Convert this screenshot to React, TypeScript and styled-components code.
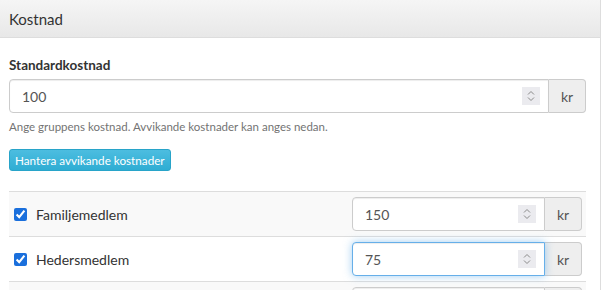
import React from 'react';
import styled, { createGlobalStyle } from 'styled-components';

const GlobalStyle = createGlobalStyle`
  html, body {
    margin: 0;
    padding: 0;
    overflow: hidden;
    background: #fff;
  }
  body {
    font-family: 'Lato', 'Noto Sans', sans-serif;
    color: #333;
  }
`;

interface CostRow {
  name: string;
  value: string;
  focused?: boolean;
}

const rows: CostRow[] = [
  { name: 'Familjemedlem', value: '150' },
  { name: 'Hedersmedlem', value: '75', focused: true },
  { name: 'Junior', value: '50' },
];

const Spinner = () => (
  <SpinBox>
    <svg width='10' height='14' viewBox='0 0 10 14' fill='none'>
      <path d='M2 5.5 L5 2.5 L8 5.5' stroke='#8a8a8a' strokeWidth='1' />
      <path d='M2 8.5 L5 11.5 L8 8.5' stroke='#8a8a8a' strokeWidth='1' />
    </svg>
  </SpinBox>
);

const MoneyInput = ({ value, focused }: { value: string; focused?: boolean }) => (
  <InputGroup>
    <Field $focused={focused}>
      <FieldText value={value} readOnly size={1} />
      <Spinner />
    </Field>
    <Addon>kr</Addon>
  </InputGroup>
);

const App = () => {
  return (
    <>
      <GlobalStyle />
      <Panel>
        <Heading>Kostnad</Heading>
        <Body>
          <Label>Standardkostnad</Label>
          <MoneyInput value='100' />
          <Help>Ange gruppens kostnad. Avvikande kostnader kan anges nedan.</Help>
          <InfoButton>Hantera avvikande kostnader</InfoButton>
          <Table>
            <colgroup>
              <col />
              <col style={{ width: 239 }} />
            </colgroup>
            <tbody>
              {rows.map((row, i) => (
                <Row key={row.name} $striped={i % 2 === 0}>
                  <NameCell>
                    <CheckLabel>
                      <Check type='checkbox' defaultChecked />
                      {row.name}
                    </CheckLabel>
                  </NameCell>
                  <InputCell>
                    <MoneyInput value={row.value} focused={row.focused} />
                  </InputCell>
                </Row>
              ))}
            </tbody>
          </Table>
        </Body>
      </Panel>
    </>
  );
};

export default App;

// Styled components
const Panel = styled.div`
  width: 600px;
  border-right: 1px solid #ddd;
  min-height: 290px;
`;

const Heading = styled.div`
  height: 38px;
  box-sizing: border-box;
  padding: 0 9px;
  display: flex;
  align-items: center;
  font-size: 15px;
  color: #333;
  background: linear-gradient(to bottom, #f5f5f5, #e8e8e8);
  border-bottom: 1px solid #ddd;
`;

const Body = styled.div`
  padding: 19px 14px 0 9px;
`;

const Label = styled.div`
  font-weight: 700;
  font-size: 13.5px;
  margin-bottom: 6px;
  line-height: 16px;
`;

const InputGroup = styled.div`
  display: flex;
  height: 34px;
`;

const Field = styled.div<{ $focused?: boolean }>`
  flex: 1;
  min-width: 0;
  display: flex;
  align-items: center;
  padding: 0 8px 0 12px;
  border: 1px solid ${(p) => (p.$focused ? '#66afe9' : '#ccc')};
  border-radius: 4px 0 0 4px;
  background: #fff;
  box-shadow: ${(p) =>
    p.$focused
      ? 'inset 0 1px 1px rgba(0,0,0,.075), 0 0 8px rgba(102,175,233,.6)'
      : 'inset 0 1px 1px rgba(0,0,0,.075)'};
  position: relative;
  z-index: ${(p) => (p.$focused ? 2 : 1)};
`;

const FieldText = styled.input`
  flex: 1;
  width: 0;
  min-width: 0;
  border: none;
  outline: none;
  padding: 0;
  background: transparent;
  font-family: inherit;
  font-size: 14px;
  color: #555;
`;

const SpinBox = styled.span`
  width: 18px;
  height: 18px;
  display: flex;
  align-items: center;
  justify-content: center;
  background: #ebebef;
`;

const Addon = styled.div`
  width: 36px;
  flex: none;
  display: flex;
  align-items: center;
  justify-content: center;
  font-size: 14px;
  color: #555;
  background: #eee;
  border: 1px solid #ccc;
  border-left: none;
  border-radius: 0 4px 4px 0;
`;

const Help = styled.p`
  margin: 6px 0 0;
  font-size: 11.5px;
  line-height: 15px;
  color: #737373;
`;

const InfoButton = styled.button`
  margin-top: 15px;
  height: 22px;
  padding: 0 5px;
  font-family: inherit;
  font-size: 11.7px;
  color: #fff;
  background: linear-gradient(to bottom, #4cbde0, #2fadd3);
  border: 1px solid #28a4c9;
  border-radius: 3px;
  cursor: pointer;
  display: block;
`;

const Table = styled.table`
  margin-top: 20px;
  width: 100%;
  border-collapse: collapse;
  table-layout: fixed;
`;

const Row = styled.tr<{ $striped: boolean }>`
  background: ${(p) => (p.$striped ? '#f9f9f9' : '#fff')};
  border-top: 1px solid #ddd;
`;

const NameCell = styled.td`
  padding: 5px;
  vertical-align: middle;
`;

const InputCell = styled.td`
  padding: 5px 4px 5px 5px;
  vertical-align: middle;
`;

const CheckLabel = styled.label`
  display: flex;
  align-items: center;
  gap: 9px;
  font-size: 14px;
  color: #333;
`;

const Check = styled.input`
  width: 13px;
  height: 13px;
  margin: 0;
  accent-color: #1a6fdc;
`;
